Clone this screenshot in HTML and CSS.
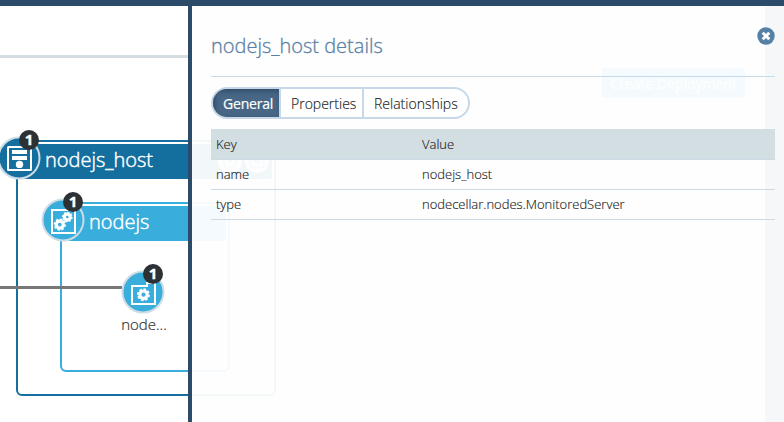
FILE: index.html
```html
<!DOCTYPE html>
<html lang="en">
<head>
<meta charset="utf-8">
<title>nodejs_host details</title>
<link rel="stylesheet" href="styles.css">
</head>
<body>
<div class="app">
  <header class="topbar"></header>
  <main class="canvas">
    <div class="rule"></div>
    <button class="create">Create Deployment</button>
    <div class="gutter"></div>

    <section class="group host">
      <h2 class="group-title">nodejs_host</h2>
      <div class="actions">
        <svg viewBox="0 0 24 24"><circle cx="12" cy="12" r="12"/><rect x="6" y="6" width="12" height="12" rx="3"/><path d="M12 9v6M10 12h4"/></svg>
        <svg viewBox="0 0 24 24"><circle cx="12" cy="12" r="12"/><rect x="5.500" y="7" width="13" height="11"/><circle class="dot" cx="12" cy="12" r="3"/></svg>
      </div>
    </section>
    <section class="group app-node">
      <h2 class="group-title">nodejs</h2>
    </section>
    <div class="connector"></div>

    <div class="node node-host">
      <svg viewBox="0 0 44 44"><circle cx="22" cy="22" r="20.500"/>
        <rect class="line" x="11" y="11" width="23" height="23" rx=".5"/>
        <path class="fill" d="M15 14h15v4H15zM15 20h15v4H15z"/><circle class="fill" cx="22.500" cy="28.400" r="3.700"/></svg>
      <span class="badge">1</span>
    </div>
    <div class="node node-app">
      <svg viewBox="0 0 44 44"><circle cx="22" cy="22" r="20.500"/>
        <rect class="line" x="11" y="12" width="23" height="23"/>
        <circle class="gear" cx="18.800" cy="26.600" r="3.500"/><circle class="teeth" cx="18.800" cy="26.600" r="5.300" pathLength="80"/>
        <circle class="gear" cx="26.300" cy="19" r="2.900"/><circle class="teeth" cx="26.300" cy="19" r="4.500" pathLength="80"/></svg>
      <span class="badge">1</span>
    </div>
    <div class="node node-module">
      <svg viewBox="0 0 44 44"><circle cx="22" cy="22" r="20.500"/>
        <path class="line" d="M11 16h15v-3h8v21H11z"/>
        <circle class="gear" cx="22.500" cy="24.700" r="3.700"/><circle class="teeth" cx="22.500" cy="24.700" r="5.600" pathLength="80"/></svg>
      <span class="badge">1</span>
      <span class="caption">node...</span>
    </div>
  </main>

  <aside class="panel">
    <button class="close" aria-label="Close"><svg viewBox="0 0 18 18"><circle cx="9" cy="9" r="8.700"/><path d="M5.700 5.700l6.600 6.600M12.300 5.700l-6.600 6.600"/></svg></button>
    <h1>nodejs_host details</h1>
    <nav class="tabs">
      <a class="tab active">General</a><a class="tab">Properties</a><a class="tab">Relationships</a>
    </nav>
    <table>
      <thead><tr><th class="key">Key</th><th>Value</th></tr></thead>
      <tbody>
        <tr><td>name</td><td>nodejs_host</td></tr>
        <tr><td>type</td><td>nodecellar.nodes.MonitoredServer</td></tr>
      </tbody>
    </table>
  </aside>
</div>
</body>
</html>
```
FILE: styles.css
```css
* { box-sizing: border-box; }
body { margin: 0; background: #fff; font-family: "Open Sans", sans-serif; font-weight: 300; color: #222; }
.app { position: relative; width: 784px; height: 422px; overflow: hidden; display: flex; flex-direction: column; }
.topbar { height: 6px; background: #2c4a69; }
.canvas { flex: 1; }
button { border: 0; padding: 0; font: inherit; }

.rule { position: absolute; left: 0; top: 55px; width: 745px; height: 3px; background: linear-gradient(90deg, #d4dee2 190px, #f0f3f5 190px); }
.gutter { position: absolute; right: 0; top: 6px; width: 19px; bottom: 0; background: #5f7f9f; }
.create { position: absolute; left: 602px; top: 68px; width: 143px; height: 30px; border-radius: 3px; background: #38acdc; color: #fff; font-size: 14px; font-weight: 400; -webkit-text-stroke: .3px #fff; }

.group { position: absolute; border: 2px solid; border-radius: 6px; padding: 2px 2px 0 0; }
.group-title { margin: 0; height: 35px; line-height: 32px; color: #fff; font-size: 20px; font-weight: 300; -webkit-text-stroke: .45px #fff; padding-left: 27px; border-radius: 0 0 3px 0; }
.host { left: 16px; top: 140px; width: 260px; height: 256px; border-color: #146f9f; }
.host .group-title { background: #146f9f; }
.app-node { left: 60px; top: 202px; width: 170px; height: 170px; border-color: #39addc; }
.app-node .group-title { background: #39addc; }
.actions { position: absolute; right: 5px; top: 7px; display: flex; gap: 3px; }
.actions svg { width: 24px; height: 24px; fill: #fff; }
.actions rect, .actions path { fill: none; stroke: #88b8d0; stroke-width: 2; }
.actions .dot { fill: #88b8d0; }
.connector { position: absolute; left: 0; top: 286px; width: 122px; height: 3px; background: #777; }

.node { position: absolute; width: 44px; height: 44px; }
.node svg { display: block; width: 44px; height: 44px; fill: #39addc; stroke: #ccdce4; stroke-width: 2; }
.node-host { left: -3px; top: 136px; }
.node-host svg { fill: #146f9f; }
.node-app { left: 41px; top: 198px; }
.node-module { left: 121px; top: 270px; }
.node svg .line { fill: none; stroke: #fff; stroke-width: 2; }
.node svg .fill { fill: #fff; stroke: none; }
.node svg .gear { fill: none; stroke: #fff; stroke-width: 3.2; }
.node svg .teeth { fill: none; stroke: #fff; stroke-width: 1.7; stroke-dasharray: 6 4; }
.badge { position: absolute; left: 22px; top: -6px; width: 20px; height: 20px; border-radius: 50%; background: #2d3133; color: #fff; font-size: 15px; font-weight: 700; line-height: 19px; text-align: center; -webkit-text-stroke: .4px #fff; }
.caption { position: absolute; left: -7px; width: 60px; top: 44px; text-align: center; font-size: 15px; line-height: 20px; color: #333; -webkit-text-stroke: .2px #333; }

.panel { position: absolute; left: 188px; top: 0; right: 0; bottom: 0; border-top: 6px solid #2c4a69; border-left: 4px solid #2c4a69; background: rgba(254, 254, 254, .95); padding: 0 9px 0 19px; }
.panel h1 { margin: 0 0 10px; height: 71px; padding-top: 25px; line-height: 30px; border-bottom: 1px solid #c4dcea; color: #5a7fa5; font-size: 20px; font-weight: 300; -webkit-text-stroke: .3px #5a7fa5; }
.close { position: absolute; right: 9px; top: 21px; width: 18px; height: 18px; background: none; }
.close svg { display: block; width: 18px; height: 18px; fill: #5681a5; }
.close path { stroke: #fff; stroke-width: 3; }
.tabs { display: flex; width: 259px; height: 32px; border: 2px solid #c7d9e9; border-radius: 16px; background: #fff; overflow: hidden; margin-bottom: 10px; }
.tab { font-size: 14px; line-height: 29px; padding-left: 10px; border-left: 2px solid #c7d9e9; flex: 1; white-space: nowrap; -webkit-text-stroke: .15px #222; }
.tab:nth-child(2) { flex: 0 0 83px; }
.tab.active { flex: 0 0 66px; border: 0; padding-left: 10px; background: #486685; color: #fff; font-weight: 400; letter-spacing: -.2px; -webkit-text-stroke: .2px #fff; box-shadow: inset 2px 2px 5px #304a68; }
table { width: 100%; border-collapse: separate; border-spacing: 0; table-layout: fixed; font-size: 13px; text-align: left; -webkit-text-stroke: .15px #222; }
th, td { height: 30px; padding: 0 5px 1px; line-height: 28px; font-weight: 300; border-bottom: 1px solid #ccdae6; }
th { height: 31px; background: #d3dee2; padding-bottom: 0; }
.key { width: 206px; }
```
